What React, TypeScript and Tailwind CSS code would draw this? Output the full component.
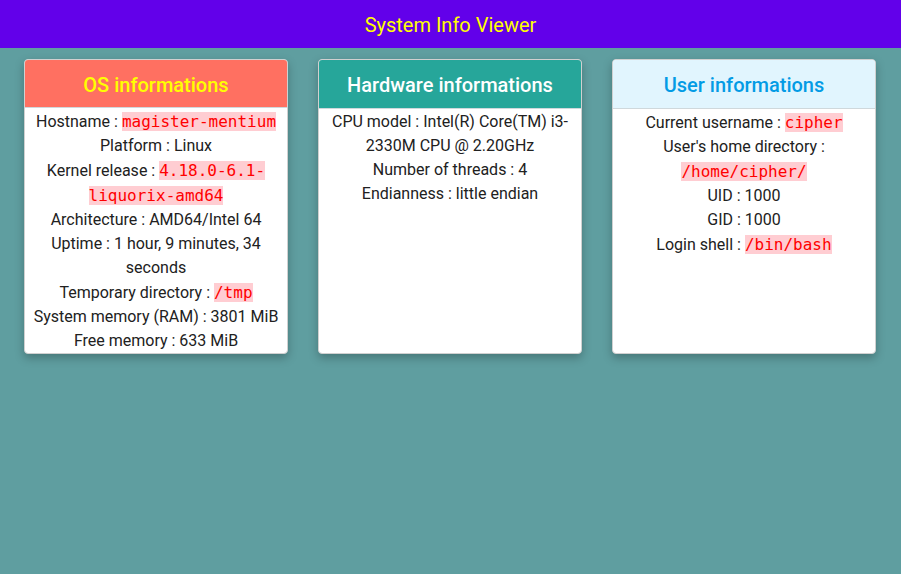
import React from "react";

const C = ({ children }: { children: React.ReactNode }) => (
  <code className="bg-[#ffcdd2] text-[#ff0000] text-[16px] leading-[25px] [font-family:'DejaVu_Sans_Mono',monospace]">
    {children}
  </code>
);

const Card = ({
  title,
  headClass,
  children,
}: {
  title: string;
  headClass: string;
  children: React.ReactNode;
}) => (
  <div className="w-[264px] h-[295px] bg-white rounded-[4px] border border-[#d0d0d0] shadow-[0_4px_10px_rgba(0,0,0,0.25)] overflow-hidden flex flex-col">
    <div className={`h-[49px] pt-[2px] flex items-center justify-center text-[20px] font-medium border-b border-[#cfd8dc] ${headClass}`}>
      {title}
    </div>
    <div className="px-2 pt-[1px] text-center text-[16px] leading-[24px] text-[#212121]">{children}</div>
  </div>
);

export default function App() {
  return (
    <div className="w-[901px] h-[574px] bg-[#5f9ea0] [font-family:Roboto,'Liberation_Sans',sans-serif]">
      <div className="h-[48px] pt-[2px] bg-[#6200ea] flex items-center justify-center text-[20px] text-[#ffff00]">
        System Info Viewer
      </div>
      <div className="flex gap-[30px] pl-[24px] pt-[11px]">
        <Card title="OS informations" headClass="bg-[#ff7061] text-[#ffff00]">
          <div>Hostname : <C>magister-mentium</C></div>
          <div>Platform : Linux</div>
          <div>Kernel release : <C>4.18.0-6.1-liquorix-amd64</C></div>
          <div>Architecture : AMD64/Intel 64</div>
          <div>Uptime : 1 hour, 9 minutes, 34 seconds</div>
          <div>Temporary directory : <C>/tmp</C></div>
          <div>System memory (RAM) : 3801 MiB</div>
          <div>Free memory : 633 MiB</div>
        </Card>
        <Card title="Hardware informations" headClass="bg-[#26a69a] text-white">
          <div>CPU model : Intel(R) Core(TM) i3-2330M CPU @ 2.20GHz</div>
          <div>Number of threads : 4</div>
          <div>Endianness : little endian</div>
        </Card>
        <Card title="User informations" headClass="bg-[#e1f5fe] text-[#039be5]">
          <div>Current username : <C>cipher</C></div>
          <div>User's home directory : <C>/home/cipher/</C></div>
          <div>UID : 1000</div>
          <div>GID : 1000</div>
          <div>Login shell : <C>/bin/bash</C></div>
        </Card>
      </div>
    </div>
  );
}
